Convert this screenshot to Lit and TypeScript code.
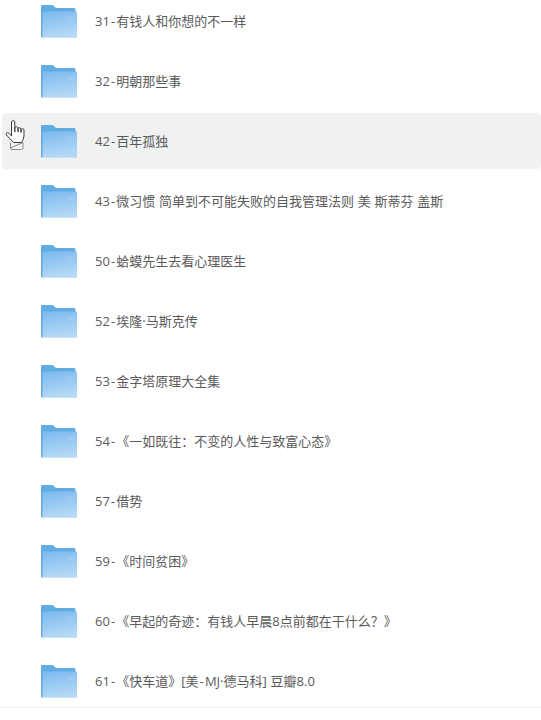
import { LitElement, html, css, svg } from "lit";
import { customElement } from "lit/decorators.js";

const items = [
  "31-有钱人和你想的不一样",
  "32-明朝那些事",
  "42-百年孤独",
  "43-微习惯 简单到不可能失败的自我管理法则 美 斯蒂芬 盖斯",
  "50-蛤蟆先生去看心理医生",
  "52-埃隆·马斯克传",
  "53-金字塔原理大全集",
  "54-《一如既往：不变的人性与致富心态》",
  "57-借势",
  "59-《时间贫困》",
  "60-《早起的奇迹：有钱人早晨8点前都在干什么？》",
  "61-《快车道》[美-MJ·德马科] 豆瓣8.0",
];

const folder = (i: number) => svg`<svg class="folder" width="36" height="33" viewBox="0 0 36 33">
  <defs><linearGradient id="f${i}" x1="0" y1="0" x2="0.25" y2="1">
    <stop offset="0" stop-color="#7ab9ee"/><stop offset="1" stop-color="#b3d8f6"/></linearGradient></defs>
  <path d="M0 1Q0 0 1 0H11Q12.500 0 13.500 1.500L15 3H33Q34.500 3 34.500 4.500V8H0Z" fill="#62ace4"/>
  <path d="M0 6.500H35Q36 6.500 36 7.500V31.500Q36 32.800 35 32.800H1Q0 32.800 0 31.500Z" fill="url(#f${i})"/>
  <path d="M0 6.500V31.500Q0 32.800 1 32.800H1.500V6.500Z" fill="#5b9fd6" opacity=".8"/>
  <path d="M1 32.300H35.500" stroke="#c6e2f9" stroke-width="1"/>
  <path d="M26 12.500h7M26 14.500h7" stroke="#a0cdf1" stroke-width="1"/>
</svg>`;

const label = (t: string) => {
  const parts = t.split("-");
  return parts.map((p, i) => i < parts.length - 1 ? html`${p}<span class="hy">-</span>` : p);
};

@customElement("app-root")
export class AppRoot extends LitElement {
  static styles = css`
    :host { display: block; height: 720px; overflow: hidden; background: #fff; position: relative;
      font-family: "Open Sans", "Noto Sans CJK SC", sans-serif; }
    .list { margin-top: -7px; padding-left: 2px; display: flex; flex-direction: column; gap: 4px; }
    .row { height: 56px; display: flex; align-items: center; gap: 18px; padding-left: 39px; border-radius: 4px; }
    .row.on { background: #f0f2f2; }
    .folder { flex: none; margin-top: 1px; }
    .name { font-size: 13px; color: #5a5a5a; white-space: pre; word-spacing: 0.4px; padding-bottom: 2px; }
    .hy { padding-left: 1px; letter-spacing: 1.2px; }
    .foot { position: absolute; left: 0; right: 0; top: 707px; border-top: 1px solid #f0f0f0; }
    .cursor { position: absolute; left: 5px; top: 119px; }
  `;
  render() {
    return html`
      <div class="list">
        ${items.map((t, i) => html`<div class="row ${i === 2 ? "on" : ""}">${folder(i)}<span class="name">${label(t)}</span></div>`)}
      </div>
      <div class="foot"></div>
      <svg class="cursor" width="22" height="32" viewBox="0 0 22 32" fill="none" stroke="#3c3c3c" stroke-width="1">
        <path d="M5.500 29V23.500M18 23.500V29Q18 30.500 16.500 30.500H7Q5.500 30.500 5.500 29Z" stroke="#8a8a8a" fill="#f4f5f5"/>
        <path d="M6.500 2.500Q8.200 0.500 9.800 2.500V13V8.500Q11.500 7 13 8.500V13V9.500Q14.500 8 16 9.500V13.500V10.500Q17.700 9 19 10.500V17Q18.500 21 16.500 23.500H8.500L1.500 16Q0.500 14 2.500 13.500Q4.500 14 6.500 17Z" fill="#fff"/>
      </svg>`;
  }
}
